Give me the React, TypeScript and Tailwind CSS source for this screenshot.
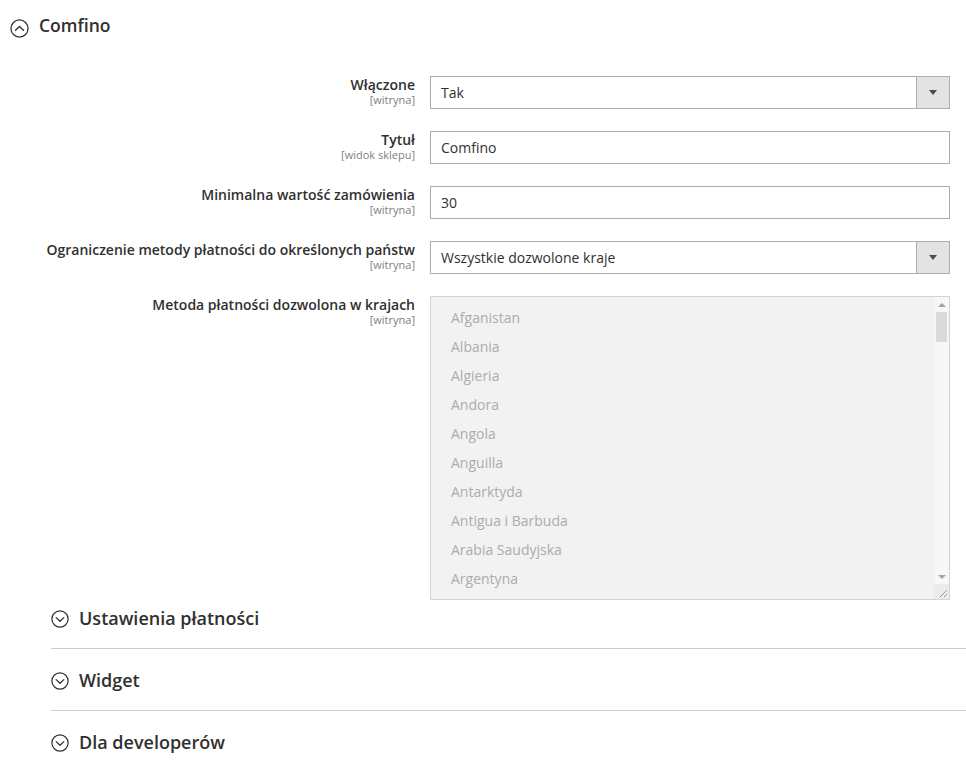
import React from "react";

const COUNTRIES = [
  "Afganistan",
  "Albania",
  "Algieria",
  "Andora",
  "Angola",
  "Anguilla",
  "Antarktyda",
  "Antigua i Barbuda",
  "Arabia Saudyjska",
  "Argentyna",
  "Armenia",
];

const SECTIONS = ["Ustawienia płatności", "Widget", "Dla developerów"];

function CircleChevron({ up, size }: { up?: boolean; size: number }) {
  return (
    <svg width={size} height={size} viewBox="0 0 18 18" className="shrink-0">
      <circle cx="9" cy="9" r="8.1" fill="none" stroke="#303030" strokeWidth="1.2" />
      <path
        d={up ? "M5.2 10.6 L9 7 L12.8 10.6" : "M5.2 7.6 L9 11.2 L12.8 7.6"}
        fill="none"
        stroke="#303030"
        strokeWidth="1.3"
        strokeLinecap="round"
        strokeLinejoin="round"
      />
    </svg>
  );
}

function FieldLabel({ label, scope }: { label: string; scope: string }) {
  return (
    <div className="text-right">
      <div className="text-[14px] leading-[18px] font-semibold text-[#303030]">{label}</div>
      <div className="text-[11px] leading-[12px] text-[#808080]">{scope}</div>
    </div>
  );
}

function SelectBox({ value }: { value: string }) {
  return (
    <div className="flex h-[33px] border border-[#adadad] bg-white">
      <div className="flex-1 flex items-center px-[10px] text-[14px] text-[#303030]">{value}</div>
      <div className="w-[33px] flex items-center justify-center bg-[#e3e3e3] border-l border-[#adadad]">
        <div className="w-0 h-0 border-l-[4px] border-r-[4px] border-t-[5px] border-l-transparent border-r-transparent border-t-[#514943]" />
      </div>
    </div>
  );
}

function TextBox({ value }: { value: string }) {
  return (
    <div className="flex items-center h-[33px] border border-[#adadad] bg-white px-[10px] text-[14px] text-[#303030]">
      {value}
    </div>
  );
}

function MultiSelect() {
  return (
    <div className="flex h-[304px] border border-[#d4d4d4] bg-[#f2f2f2] overflow-hidden">
      <div className="flex-1 pt-[6px] pl-[20px] overflow-hidden">
        {COUNTRIES.map((c) => (
          <div key={c} className="h-[29px] leading-[29px] text-[14px] text-[#acacac] whitespace-nowrap">
            {c}
          </div>
        ))}
      </div>
      <div className="w-[15px] flex flex-col bg-[#f7f7f7]">
        <div className="h-[15px] flex items-center justify-center">
          <div className="w-0 h-0 border-l-[4px] border-r-[4px] border-b-[4px] border-l-transparent border-r-transparent border-b-[#a3a3a3]" />
        </div>
        <div className="mx-[2px] h-[30px] bg-[#dadada]" />
        <div className="flex-1" />
        <div className="h-[15px] flex items-center justify-center">
          <div className="w-0 h-0 border-l-[4px] border-r-[4px] border-t-[4px] border-l-transparent border-r-transparent border-t-[#a3a3a3]" />
        </div>
        <div className="h-[15px] bg-[#ebebeb] flex items-end justify-end">
          <svg width="15" height="15" viewBox="0 0 15 15">
            <path d="M6 13 L13 6 M10 13 L13 10" stroke="#9a9a9a" strokeWidth="1" />
          </svg>
        </div>
      </div>
    </div>
  );
}

export default function App() {
  return (
    <div className="w-[966px] min-h-[779px] bg-white font-['Open_Sans',sans-serif]">
      <div className="flex items-start pt-[15px] pl-[10px] gap-[10px]">
        <div className="mt-[4px]">
          <CircleChevron up size={19} />
        </div>
        <div className="text-[17.5px] leading-[20px] font-semibold text-[#303030]">Comfino</div>
      </div>

      <div className="grid grid-cols-[415px_520px] gap-x-[15px] gap-y-[22px] pt-[38px]">
        <FieldLabel label="Włączone" scope="[witryna]" />
        <SelectBox value="Tak" />

        <FieldLabel label="Tytuł" scope="[widok sklepu]" />
        <TextBox value="Comfino" />

        <FieldLabel label="Minimalna wartość zamówienia" scope="[witryna]" />
        <TextBox value="30" />

        <FieldLabel label="Ograniczenie metody płatności do określonych państw" scope="[witryna]" />
        <SelectBox value="Wszystkie dozwolone kraje" />

        <FieldLabel label="Metoda płatności dozwolona w krajach" scope="[witryna]" />
        <MultiSelect />
      </div>

      <div className="ml-[51px]">
        {SECTIONS.map((s, i) => (
          <div
            key={s}
            className={`flex items-start gap-[10px] pb-[20px] ${i === 0 ? "pt-[8px]" : "pt-[21px]"} ${
              i < SECTIONS.length - 1 ? "border-b border-[#cccccc]" : ""
            }`}
          >
            <div className="mt-[2px]">
              <CircleChevron size={18} />
            </div>
            <div className="text-[18px] leading-[20px] font-semibold text-[#303030]">{s}</div>
          </div>
        ))}
      </div>
    </div>
  );
}
